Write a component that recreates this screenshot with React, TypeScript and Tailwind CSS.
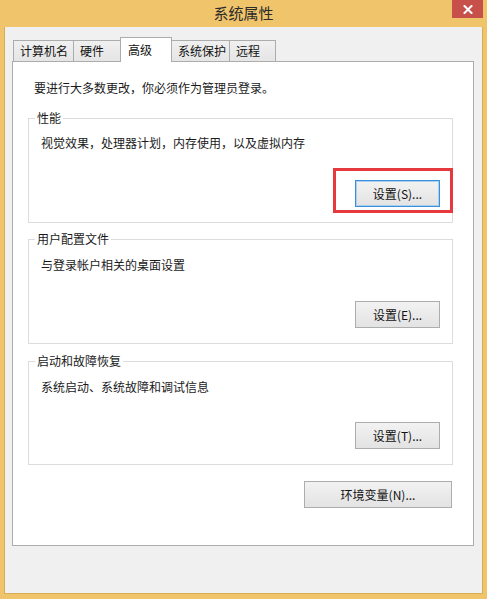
import React from "react";

const tabs = [
  { label: "计算机名", w: "w-[61px]" },
  { label: "硬件", w: "w-[48px]" },
  { label: "高级", w: "w-[52px]", active: true },
  { label: "系统保护", w: "w-[59px]" },
  { label: "远程", w: "w-[47px]" },
];

function Btn({ children, primary, wide }: { children: React.ReactNode; primary?: boolean; wide?: boolean }) {
  return (
    <button
      className={
        "h-[27px] flex items-center justify-center text-[12px] leading-[16px] text-[#111] border bg-gradient-to-b from-[#f2f2f2] to-[#e3e3e3] " +
        (wide ? "w-[148px] " : "w-[85px] ") +
        (primary ? "border-[#3d8ed8] shadow-[inset_0_0_0_1px_#a8d0f0]" : "border-[#adadad]")
      }
    >
      {children}
    </button>
  );
}

function Group({
  title,
  text,
  button,
  primary,
  height,
  pt,
  marked,
}: {
  title: string;
  text: string;
  button: string;
  primary?: boolean;
  height: string;
  pt: string;
  marked?: boolean;
}) {
  return (
    <div className={"relative ml-[15px] w-[425px] border border-[#dcdcdc] flex flex-col " + height}>
      <span className="absolute left-[6px] top-[-9px] bg-white px-[2px] text-[12px] leading-[16px] text-[#1a1a1a]">
        {title}
      </span>
      <div className={"pl-[12px] text-[12px] leading-[16px] text-[#1a1a1a] " + pt}>{text}</div>
      <div className="mt-auto pb-[15px] pr-[12px] flex justify-end">
        <Btn primary={primary}>{button}</Btn>
      </div>
      {marked && (
        <div className="absolute right-[-1px] bottom-[9px] w-[120px] h-[45px] border-[3px] border-[#e5393e]" />
      )}
    </div>
  );
}

export default function App() {
  return (
    <div className="w-[487px] h-[599px] bg-[#f0c46b] flex flex-col font-['Noto_Sans_CJK_SC','Noto_Sans',sans-serif] overflow-hidden">
      {/* title bar */}
      <div className="relative h-[27px] shrink-0 flex items-center justify-center">
        <span className="text-[15px] leading-[18px] text-[#2b2b2b] mt-[-1px]">系统属性</span>
        <div className="absolute right-[4px] top-0 w-[31px] h-[18px] bg-[#c8504b] flex items-center justify-center">
          <svg width="10" height="9" viewBox="0 0 10 9">
            <path d="M1.5 1 L8.5 8 M8.5 1 L1.5 8" stroke="#fff" strokeWidth="2" strokeLinecap="square" />
          </svg>
        </div>
      </div>

      {/* window body */}
      <div className="mx-[4px] h-[567px] shrink-0 bg-[#f0f0f0] border-l border-r border-b border-[#d6ae57] pt-[10px] flex flex-col">
        {/* tabs */}
        <div className="flex items-end h-[24px] pl-[8px] relative z-10">
          {tabs.map((t, i) =>
            t.active ? (
              <div
                key={t.label}
                className={
                  "h-[25px] mb-[-1px] -ml-px bg-white border border-b-0 border-[#acacac] flex items-center pl-[7px] text-[12px] leading-[16px] text-[#111] " +
                  t.w
                }
              >
                {t.label}
              </div>
            ) : (
              <div
                key={t.label}
                className={
                  "h-[21px] border border-b-0 border-[#acacac] bg-gradient-to-b from-[#f0f0f0] to-[#e5e5e5] flex items-center pl-[6px] text-[12px] leading-[16px] text-[#111] " +
                  (i === 0 ? "" : "-ml-px ") +
                  t.w
                }
              >
                {t.label}
              </div>
            )
          )}
        </div>

        {/* tab page */}
        <div className="ml-[7px] w-[462px] h-[485px] bg-white border border-[#acacac] pt-[18px] flex flex-col">
          <div className="pl-[21px] text-[12px] leading-[16px] text-[#1a1a1a]">
            要进行大多数更改，你必须作为管理员登录。
          </div>

          <div className="mt-[22px]">
            <Group
              title="性能"
              text="视觉效果，处理器计划，内存使用，以及虚拟内存"
              button="设置(S)..."
              primary
              height="h-[105px]"
              pt="pt-[16px]"
              marked
            />
          </div>
          <div className="mt-[16px]">
            <Group
              title="用户配置文件"
              text="与登录帐户相关的桌面设置"
              button="设置(E)..."
              height="h-[105px]"
              pt="pt-[17px]"
            />
          </div>
          <div className="mt-[17px]">
            <Group
              title="启动和故障恢复"
              text="系统启动、系统故障和调试信息"
              button="设置(T)..."
              height="h-[104px]"
              pt="pt-[17px]"
            />
          </div>

          <div className="mt-[16px] flex justify-end pr-[21px]">
            <Btn wide>环境变量(N)...</Btn>
          </div>
        </div>
      </div>
    </div>
  );
}
